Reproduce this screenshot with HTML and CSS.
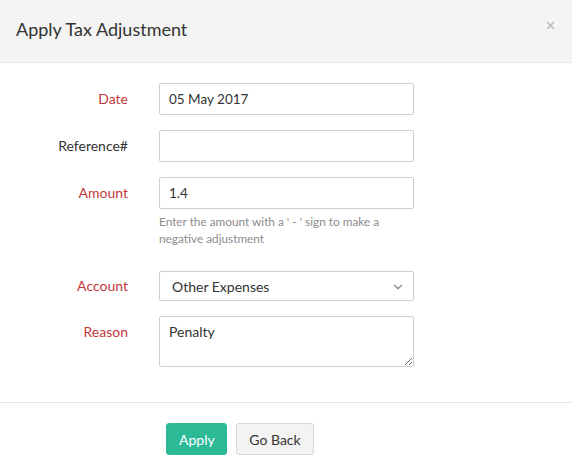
FILE: index.html
```html
<!DOCTYPE html>
<html>
<head>
<meta charset="utf-8">
<link rel="stylesheet" href="styles.css">
</head>
<body>
<div class="modal">
  <div class="modal-header">
    <h4 class="modal-title">Apply Tax Adjustment</h4>
    <button class="close" type="button" aria-label="Close">
      <svg width="9" height="9" viewBox="0 0 9 9"><path d="M1 1L8 8M8 1L1 8" stroke="#b8b8b8" stroke-width="1.4" fill="none"/></svg>
    </button>
  </div>
  <form class="modal-body">
    <div class="row">
      <label class="label required">Date</label>
      <input class="control" type="text" value="05 May 2017">
    </div>
    <div class="row">
      <label class="label">Reference#</label>
      <input class="control" type="text" value="">
    </div>
    <div class="row row-help">
      <label class="label required">Amount</label>
      <div class="field">
        <input class="control" type="text" value="1.4">
        <p class="help">Enter the amount with a ' - ' sign to make a negative adjustment</p>
      </div>
    </div>
    <div class="row row-select">
      <label class="label required">Account</label>
      <div class="select-wrap">
        <select class="control select">
          <option>Other Expenses</option>
        </select>
        <svg class="chevron" width="10" height="6" viewBox="0 0 10 6"><path d="M1 1L5 4.6L9 1" stroke="#999" stroke-width="1.6" fill="none"/></svg>
      </div>
    </div>
    <div class="row">
      <label class="label required">Reason</label>
      <textarea class="control textarea">Penalty</textarea>
    </div>
  </form>
  <div class="modal-footer">
    <button class="btn btn-primary" type="button">Apply</button>
    <button class="btn btn-default" type="button">Go Back</button>
  </div>
</div>
</body>
</html>
```
FILE: styles.css
```css
* { box-sizing: border-box; }
html, body { margin: 0; padding: 0; background: #fff; }
body {
  font-family: Lato, "Open Sans", sans-serif;
  color: #333;
  width: 572px;
  height: 471px;
  overflow: hidden;
}
.modal { width: 572px; }
.modal-header {
  height: 63px;
  background: #f4f4f4;
  border-bottom: 1px solid #e6e6e6;
  display: flex;
  align-items: center;
  justify-content: space-between;
  padding: 0 16px 4px 16px;
}
.modal-title {
  margin: 0;
  font-size: 18px;
  font-weight: 400;
  color: #333;
}
.close {
  border: 0;
  background: none;
  padding: 0;
  margin: 0 1px 8px 0;
  display: flex;
  cursor: pointer;
}
.modal-body {
  margin: 0;
  padding: 20px 0 35px 0;
}
.row {
  display: grid;
  grid-template-columns: 128px 255px;
  column-gap: 31px;
  align-items: start;
  margin-bottom: 15px;
}
.row:last-child { margin-bottom: 0; }
.row-help { margin-bottom: 24px; }
.label {
  text-align: right;
  font-size: 14px;
  line-height: 32px;
  color: #333;
}
.row-select .label { line-height: 30px; }
.label.required { color: #c0393a; }
.control {
  display: block;
  width: 255px;
  height: 32px;
  border: 1px solid #cfcfcf;
  border-radius: 2px;
  padding: 0 9px;
  font-family: inherit;
  font-size: 13.5px;
  color: #333;
  background: #fff;
  outline: none;
}
.help {
  margin: 4px 0 0 0;
  font-size: 11.8px;
  line-height: 17px;
  color: #8c8c8c;
  width: 250px;
}
.select-wrap { position: relative; width: 255px; }
.select {
  height: 30px;
  appearance: none;
  -webkit-appearance: none;
  padding-left: 12px;
  font-size: 14px;
}
.chevron {
  position: absolute;
  right: 11px;
  top: 13px;
  pointer-events: none;
}
.textarea {
  height: 51px;
  padding: 6px 9px;
  line-height: 18px;
  font-size: 14px;
  resize: vertical;
}
.modal-footer {
  border-top: 1px solid #e6e6e6;
  padding: 20px 0 0 166px;
  display: flex;
  gap: 9px;
}
.btn {
  height: 32px;
  border-radius: 3px;
  font-family: inherit;
  font-size: 14px;
  padding: 0 12px;
  cursor: pointer;
}
.btn-primary {
  background: #2cb996;
  border: 1px solid #2cb996;
  color: #fff;
  width: 61px;
}
.btn-default {
  background: #f3f3f3;
  border: 1px solid #d9d9d9;
  color: #333;
  width: 78px;
}
```
